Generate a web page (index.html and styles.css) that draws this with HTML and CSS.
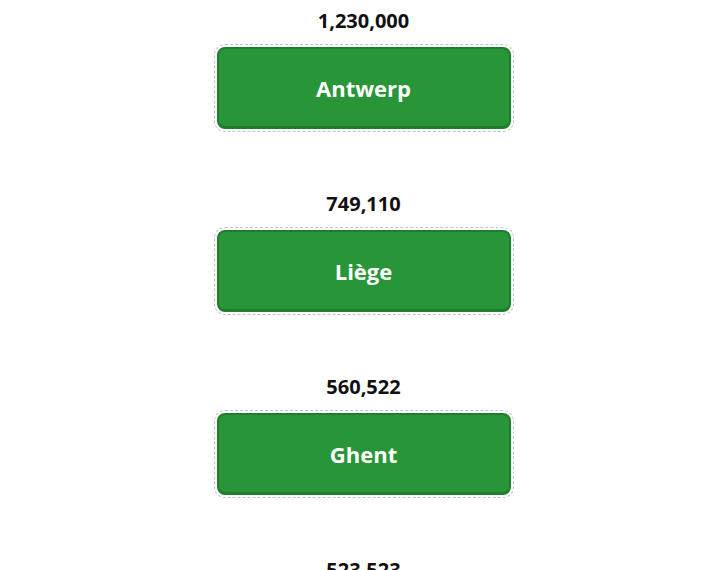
FILE: index.html
```html
<!DOCTYPE html>
<html lang="en">
<head>
  <meta charset="utf-8">
  <title>Cities</title>
  <link rel="stylesheet" href="styles.css">
</head>
<body>
  <section id="cities">
    <div class="city">
      <p class="count">1,230,000</p>
      <button class="city-btn">Antwerp</button>
    </div>
    <div class="city">
      <p class="count">749,110</p>
      <button class="city-btn">Liège</button>
    </div>
    <div class="city">
      <p class="count">560,522</p>
      <button class="city-btn">Ghent</button>
    </div>
    <div class="city">
      <p class="count">523,523</p>
      <button class="city-btn">Charleroi</button>
    </div>
  </section>
</body>
</html>
```

FILE: styles.css
```css
body {
   margin: 0;
   background: #fff;
   font-family: "Open Sans", "Noto Sans", sans-serif;
}

#cities {
   padding-top: 9px;
}

.city {
   display: flex;
   flex-direction: column;
   align-items: center;
   margin-bottom: 63px;
}

.count {
   margin: 0 0 14px;
   font-size: 20px;
   line-height: 24px;
   font-weight: 700;
   color: #111;
}

.city-btn {
   width: 294px;
   height: 82px;
   background: #279538;
   border: 2px solid #1f7d2e;
   border-bottom-width: 3px;
   border-radius: 8px;
   outline: 1px dashed #c4c4c4;
   outline-offset: 2px;
   color: #fff;
   font-family: inherit;
   font-size: 22px;
   font-weight: 700;
   cursor: pointer;
}
```
